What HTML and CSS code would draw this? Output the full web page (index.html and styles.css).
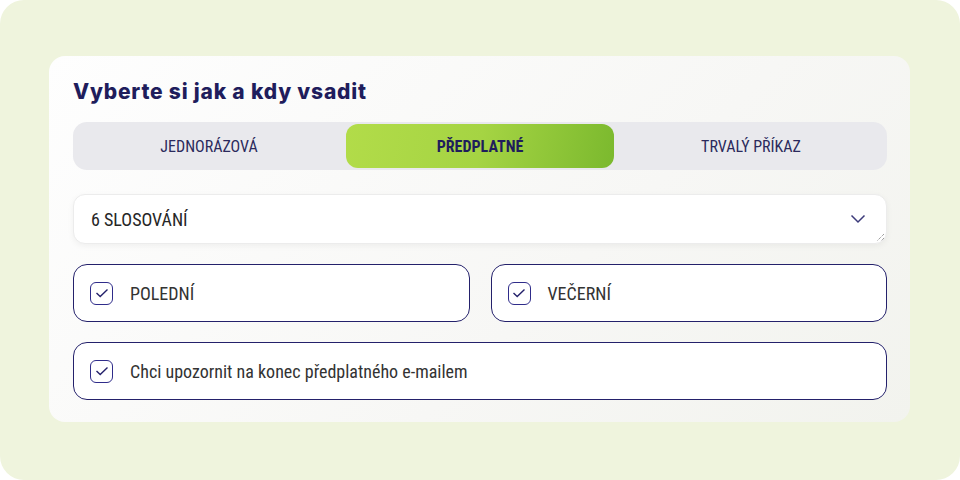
FILE: index.html
```html
<!DOCTYPE html>
<html lang="cs">
<head>
    <meta charset="UTF-8">
    <meta name="viewport" content="width=device-width, initial-scale=1.0">
    <title>Předplatné</title>
    <link rel="stylesheet" href="styles.css">
</head>
<body>
    <div class="frame">
        <div class="card">
            <h2 class="title">Vyberte si jak a kdy vsadit</h2>

            <div class="tabs">
                <button class="tab">JEDNORÁZOVÁ</button>
                <button class="tab active">PŘEDPLATNÉ</button>
                <button class="tab">TRVALÝ PŘÍKAZ</button>
            </div>

            <div class="select">
                <span>6 SLOSOVÁNÍ</span>
                <svg class="chevron" width="16" height="10" viewBox="0 0 16 10">
                    <path d="M1.5 1.5 L8 8 L14.5 1.5" fill="none" stroke="#3b3a7a" stroke-width="1.5"/>
                </svg>
                <svg class="grip" width="10" height="10" viewBox="0 0 10 10">
                    <path d="M9 2 L2 9 M9 6 L6 9" stroke="#777" stroke-width="1" stroke-dasharray="1 1"/>
                </svg>
            </div>

            <div class="options">
                <label class="option">
                    <span class="check">
                        <svg width="14" height="10" viewBox="0 0 14 10"><path d="M1.5 5 L5.2 8.5 L12.5 1.5" fill="none" stroke="#24216b" stroke-width="1.4"/></svg>
                    </span>
                    <span class="option-text">POLEDNÍ</span>
                </label>
                <label class="option">
                    <span class="check">
                        <svg width="14" height="10" viewBox="0 0 14 10"><path d="M1.5 5 L5.2 8.5 L12.5 1.5" fill="none" stroke="#24216b" stroke-width="1.4"/></svg>
                    </span>
                    <span class="option-text">VEČERNÍ</span>
                </label>
                <label class="option wide">
                    <span class="check">
                        <svg width="14" height="10" viewBox="0 0 14 10"><path d="M1.5 5 L5.2 8.5 L12.5 1.5" fill="none" stroke="#24216b" stroke-width="1.4"/></svg>
                    </span>
                    <span class="option-text">Chci upozornit na konec předplatného e-mailem</span>
                </label>
            </div>
        </div>
    </div>
</body>
</html>
```

FILE: styles.css
```css
body {
    margin: 0;
    background: #fff;
    font-family: "Roboto Condensed", Roboto, sans-serif;
}

.frame {
    width: 960px;
    height: 480px;
    box-sizing: border-box;
    background: #eff4dd;
    border-radius: 24px;
    padding: 56px 50px 58px 49px;
}

.card {
    height: 100%;
    box-sizing: border-box;
    background: linear-gradient(135deg, #fefefe 0%, #f7f7f5 60%, #f2f3ee 100%);
    border-radius: 16px;
    padding: 22px 23px 0 24px;
}

.title {
    margin: 0 0 17px;
    font-family: Inter, sans-serif;
    font-weight: 800;
    font-size: 21px;
    line-height: 27px;
    color: #1f1d5c;
    letter-spacing: 0.8px;
}

.tabs {
    display: grid;
    grid-template-columns: repeat(3, 1fr);
    gap: 3px;
    padding: 2px;
    height: 48px;
    box-sizing: border-box;
    background: #e9e9ed;
    border-radius: 14px;
    margin-bottom: 24px;
}

.tab {
    border: none;
    background: transparent;
    border-radius: 12px;
    font-family: "Roboto Condensed", Roboto, sans-serif;
    font-size: 16px;
    color: #2b2a5c;
    cursor: pointer;
}

.tab.active {
    background: linear-gradient(100deg, #b2dc49 0%, #a5d443 50%, #7bb92e 100%);
    font-weight: 700;
    color: #1f1d5c;
}

.select {
    position: relative;
    display: flex;
    align-items: center;
    justify-content: space-between;
    height: 50px;
    box-sizing: border-box;
    padding: 0 20px 0 17px;
    background: #fff;
    border: 1px solid #ececec;
    border-radius: 12px;
    box-shadow: 0 2px 6px rgba(0, 0, 0, 0.05);
    font-size: 18px;
    color: #262626;
    margin-bottom: 20px;
}

.grip {
    position: absolute;
    right: 1px;
    bottom: 1px;
}

.options {
    display: grid;
    grid-template-columns: 1fr 1fr;
    gap: 20px 21px;
}

.option {
    display: flex;
    align-items: center;
    gap: 17px;
    height: 58px;
    box-sizing: border-box;
    padding: 0 16px;
    background: #fff;
    border: 1px solid #24216b;
    border-radius: 14px;
    cursor: pointer;
}

.option.wide {
    grid-column: span 2;
}

.check {
    display: flex;
    align-items: center;
    justify-content: center;
    width: 23px;
    height: 23px;
    box-sizing: border-box;
    border: 1px solid #2f2c8a;
    border-radius: 6px;
}

.option-text {
    font-size: 18px;
    color: #333;
}
```
